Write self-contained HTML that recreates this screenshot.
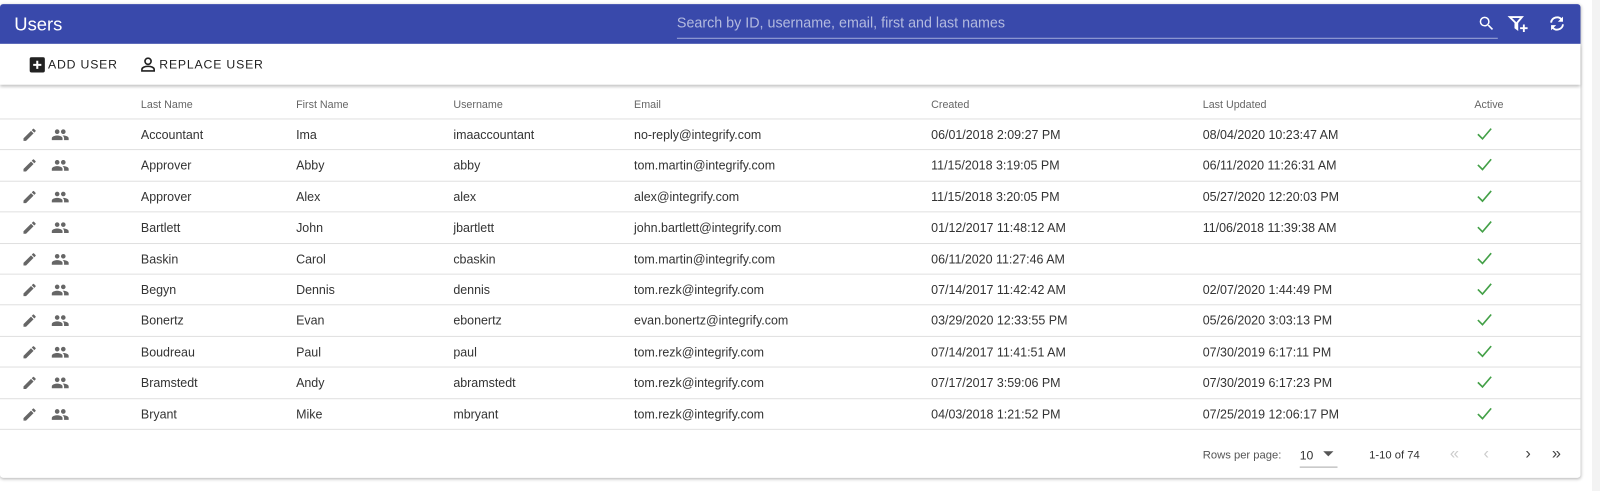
<!DOCTYPE html>
<html><head><meta charset="utf-8"><style>
*{margin:0;padding:0;box-sizing:border-box}
body{width:1600px;height:491px;background:#fff;font-family:"Liberation Sans",sans-serif;position:relative;overflow:hidden;color:#222}
#w{position:absolute;left:0;top:0;width:1568px;height:481px;transform:scale(1.021);transform-origin:0 0}
.strip{position:absolute;left:1559px;top:0;width:41px;height:491px;background:#f3f3f3}
.card{position:absolute;left:0;top:4px;width:1548px;height:464px;background:#fff;border-radius:3px;box-shadow:0 1px 3px rgba(0,0,0,.3)}
.hdr{position:absolute;left:0;top:0;width:1548px;height:39px;background:#3949ab;border-radius:3px 3px 0 0}
.title{position:absolute;left:14px;top:10px;color:#fff;font-size:18px}
.search{position:absolute;left:663px;top:10px;width:804px;height:24px;border-bottom:1px solid #9fa8da;color:#b3badf;font-size:14px}
.tb{position:absolute;left:0;top:39px;width:1548px;height:40px;background:#fff;box-shadow:0 2px 3px rgba(0,0,0,.25)}
.btn{position:absolute;top:13px;font-size:12px;letter-spacing:0.8px;color:#222}
.th{position:absolute;top:93px;font-size:10.5px;color:#666}
.row{position:absolute;left:0;width:1548px;height:30.4px;border-top:1px solid #e0e0e0;font-size:12.2px;color:#333}
.row span{position:absolute;top:8px}
.foot{position:absolute;font-size:11px;color:#555}
svg{position:absolute}
</style></head><body>
<div class="strip" style="left:1592px"></div>
<div id="w">
<div class="card">
<div class="hdr">
<div class="title">Users</div>
<div class="search">Search by ID, username, email, first and last names</div>
<svg style="left:1447px;top:10px" width="18" height="18" viewBox="0 0 24 24"><path fill="#fff" d="M15.5 14h-.79l-.28-.27A6.47 6.47 0 0016 9.5 6.5 6.5 0 109.5 16c1.61 0 3.090-.59 4.23-1.57l.27.28v.79l5 4.99L20.49 19zm-6 0C7.01 14 5 11.99 5 9.5S7.01 5 9.5 5 14 7.01 14 9.5 11.99 14 9.5 14z"/></svg>
<svg style="left:1476px;top:9px" width="22" height="22" viewBox="0 0 24 24"><path fill="none" stroke="#fff" stroke-width="2" d="M3 4h13l-5 6v7l-2-1.5V10z"/><path stroke="#fff" stroke-width="2" d="M18 12v8M14 16h8"/></svg>
<svg style="left:1515px;top:9px" width="20" height="20" viewBox="0 0 24 24"><path fill="none" stroke="#fff" stroke-width="2.2" d="M5 11a7 7 0 0112.5-3.5M19 13a7 7 0 01-12.5 3.5"/><path fill="#fff" d="M19 4v6h-6zM5 20v-6h6z"/></svg>
</div>
<div class="tb">
<svg style="left:29px;top:13px" width="15" height="15" viewBox="0 0 15 15"><rect width="15" height="15" rx="2" fill="#222"/><path stroke="#fff" stroke-width="2" d="M7.5 3.5v8M3.5 7.5h8"/></svg>
<div class="btn" style="left:47px">ADD USER</div>
<svg style="left:137px;top:12px" width="16" height="16" viewBox="0 0 16 16"><circle cx="8" cy="5" r="3" fill="none" stroke="#222" stroke-width="1.6"/><path d="M2 14.5v-1.5c0-2 3-3 6-3s6 1 6 3v1.5z" fill="none" stroke="#222" stroke-width="1.6"/></svg>
<div class="btn" style="left:156px">REPLACE USER</div>
</div>
<div class="th" style="left:138px">Last Name</div>
<div class="th" style="left:290px">First Name</div>
<div class="th" style="left:444px">Username</div>
<div class="th" style="left:621px">Email</div>
<div class="th" style="left:912px">Created</div>
<div class="th" style="left:1178px">Last Updated</div>
<div class="th" style="left:1444px">Active</div>
</div>
<div id="rows"></div>
<div style="position:absolute;left:0;top:420px;width:1548px;border-top:1px solid #e0e0e0"></div>
<div class="foot" style="left:1178px;top:440px">Rows per page:</div>
<div class="foot" style="left:1273px;top:439px;font-size:12px;color:#333">10</div>
<svg style="left:1295px;top:441px" width="12" height="8"><path d="M1 1h10L6 6z" fill="#555"/></svg>
<div style="position:absolute;left:1273px;top:457px;width:37px;border-top:1px solid #aaa"></div>
<div class="foot" style="left:1341px;top:440px;color:#333">1-10 of 74</div>
<div class="foot" style="left:1420px;top:436px;font-size:16px;color:#ccc">&#171;</div>
<div class="foot" style="left:1453px;top:436px;font-size:16px;color:#ccc">&#8249;</div>
<div class="foot" style="left:1494px;top:436px;font-size:16px;color:#444">&#8250;</div>
<div class="foot" style="left:1520px;top:436px;font-size:16px;color:#444">&#187;</div>
</div>
<script>
var d=[["Accountant","Ima","imaaccountant","no-reply@integrify.com","06/01/2018 2:09:27 PM","08/04/2020 10:23:47 AM"],
["Approver","Abby","abby","tom.martin@integrify.com","11/15/2018 3:19:05 PM","06/11/2020 11:26:31 AM"],
["Approver","Alex","alex","alex@integrify.com","11/15/2018 3:20:05 PM","05/27/2020 12:20:03 PM"],
["Bartlett","John","jbartlett","john.bartlett@integrify.com","01/12/2017 11:48:12 AM","11/06/2018 11:39:38 AM"],
["Baskin","Carol","cbaskin","tom.martin@integrify.com","06/11/2020 11:27:46 AM",""],
["Begyn","Dennis","dennis","tom.rezk@integrify.com","07/14/2017 11:42:42 AM","02/07/2020 1:44:49 PM"],
["Bonertz","Evan","ebonertz","evan.bonertz@integrify.com","03/29/2020 12:33:55 PM","05/26/2020 3:03:13 PM"],
["Boudreau","Paul","paul","tom.rezk@integrify.com","07/14/2017 11:41:51 AM","07/30/2019 6:17:11 PM"],
["Bramstedt","Andy","abramstedt","tom.rezk@integrify.com","07/17/2017 3:59:06 PM","07/30/2019 6:17:23 PM"],
["Bryant","Mike","mbryant","tom.rezk@integrify.com","04/03/2018 1:21:52 PM","07/25/2019 12:06:17 PM"]];
var x=[138,290,444,621,912,1178],h="";
d.forEach(function(r,i){var t=116+i*30.4;h+='<div class="row" style="top:'+t+'px">'+
'<svg style="left:21px;top:7px" width="16" height="16" viewBox="0 0 24 24"><path fill="#666" d="M3 17.25V21h3.75L17.81 9.94l-3.75-3.75zM20.71 7.04a1 1 0 000-1.41l-2.34-2.34a1 1 0 00-1.410 0l-1.83 1.83 3.75 3.75z"/></svg>'+
'<svg style="left:50px;top:6px" width="18" height="18" viewBox="0 0 24 24"><path fill="#666" d="M16 11c1.66 0 2.99-1.34 2.99-3S17.66 5 16 5s-3 1.34-3 3 1.34 3 3 3zm-8 0c1.66 0 2.99-1.34 2.99-3S9.66 5 8 5 5 6.34 5 8s1.34 3 3 3zm0 2c-2.33 0-7 1.17-7 3.5V19h14v-2.5c0-2.33-4.67-3.5-7-3.5zm8 0c-.29 0-.62.02-.97.05 1.16.84 1.97 1.970 1.97 3.45V19h6v-2.5c0-2.33-4.67-3.5-7-3.5z"/></svg>';
r.forEach(function(c,j){h+='<span style="left:'+x[j]+'px">'+c+'</span>'});
h+='<svg style="left:1446px;top:7px" width="16" height="14" viewBox="0 0 16 14"><path d="M1.5 7.5l4.5 4.5 8.5-10" fill="none" stroke="#43a047" stroke-width="1.6"/></svg></div>'});
document.getElementById('rows').innerHTML=h;
</script>
</body></html>
